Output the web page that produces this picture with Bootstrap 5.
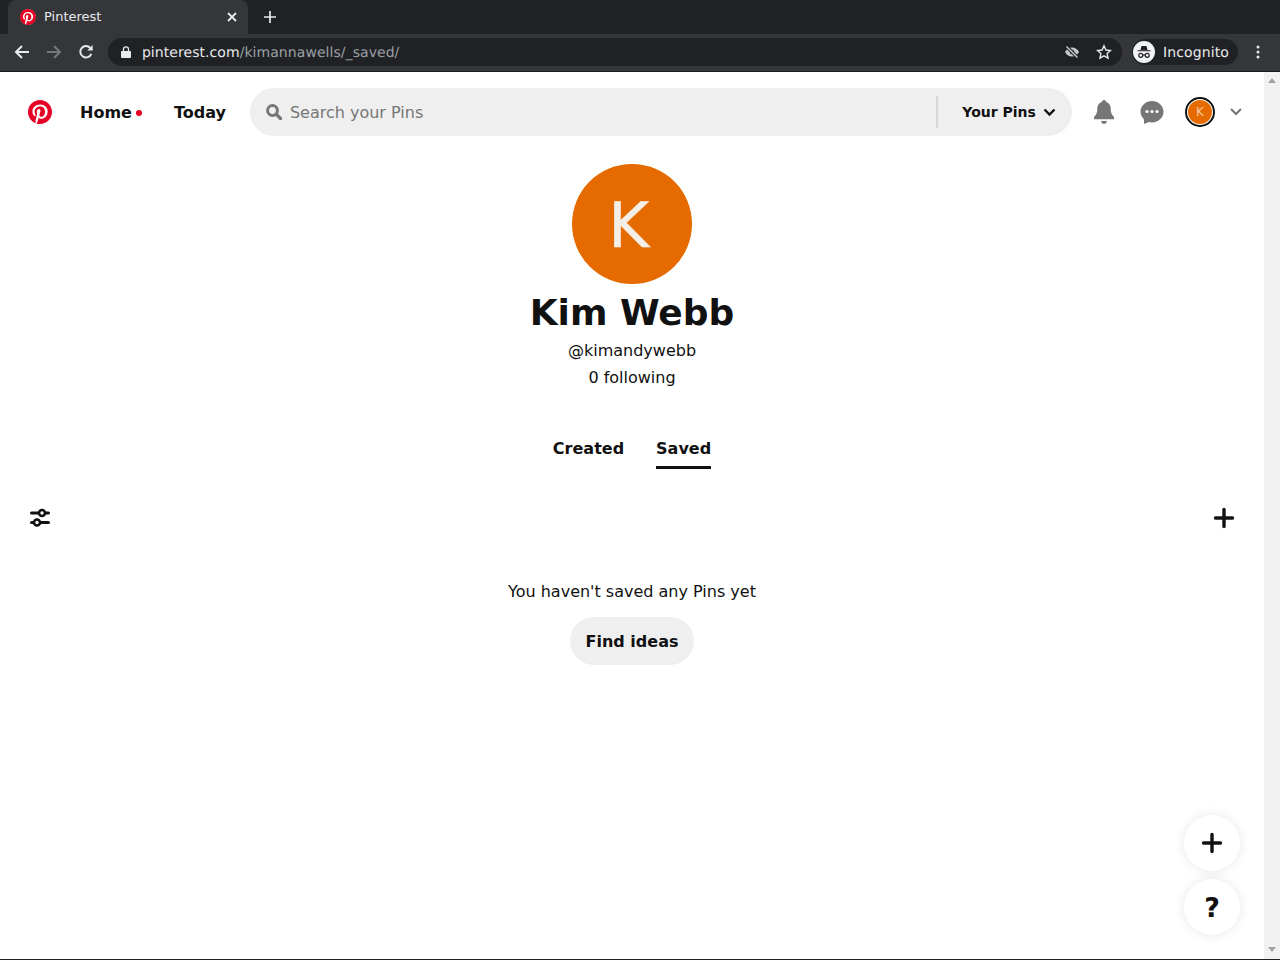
<!DOCTYPE html>
<html lang="en">
<head>
  <meta charset="UTF-8">
  <meta name="viewport" content="width=device-width, initial-scale=1.0">
  <title>Pinterest</title>
  <link href="https://cdn.jsdelivr.net/npm/bootstrap@5.3.0/dist/css/bootstrap.min.css" rel="stylesheet">
  <style>
    html, body { height: 960px; overflow: hidden; }
    body { font-family: "DejaVu Sans", sans-serif; color: #111; background: #fff; }

    /* browser chrome */
    .tab-strip { height: 34px; background: #202124; padding-left: 8px; }
    .tab-active { width: 240px; height: 34px; background: #35363a; border-radius: 8px 8px 0 0; color: #e8eaed; font-size: 13px; padding: 0 11px 0 12px; }
    .tab-title { margin-left: 8px; }
    .plus-new { margin-left: 16px; }
    .tool-bar { height: 38px; background: #35363a; border-bottom: 1px solid #1a1b1e; padding: 0 6px 1px 6px; }
    .tool-btn { width: 32px; height: 32px; }
    .menu-btn { margin-left: 4px; }
    .omnibox { height: 28px; width: 1015px; margin-left: 6px; background: #202124; border-radius: 14px; padding: 0 10px 0 12px; font-size: 14px; color: #e8eaed; text-rendering: geometricPrecision; }
    .url-text { margin-left: 10px; margin-top: 2px; letter-spacing: .06px; }
    .url-path { color: #9aa0a6; }
    .star-icon { margin-left: 16px; }
    .incognito-chip { height: 26px; width: 106px; margin-left: 10px; border-radius: 13px; background: #202124; color: #e8eaed; font-size: 14px; padding-left: 1px; text-rendering: geometricPrecision; }
    .incognito-face { width: 22px; height: 22px; background: #f1f3f4; border-radius: 50%; margin-right: 8px; }
    .incognito-word { margin-top: 2px; letter-spacing: .1px; }

    /* page */
    .page-area { height: 888px; border-bottom: 1px solid #222; }
    .page-main { width: 1264px; }
    .scroll-track { width: 16px; background: #f1f1f1; padding: 6px 0 7px; }
    .arrow-up { width: 0; height: 0; border: 4px solid transparent; border-top: 0; border-bottom: 5px solid #a3a3a3; }
    .arrow-down { width: 0; height: 0; border: 4px solid transparent; border-bottom: 0; border-top: 5px solid #a3a3a3; }

    .pin-header { height: 80px; padding: 16px 20px 16px 28px; }
    .nav-word { font-size: 16px; font-weight: 700; color: #111; margin-top: 2px; }
    .nav-home { margin-left: 28px; }
    .nav-today { margin-left: 32px; }
    .home-dot { width: 6px; height: 6px; border-radius: 50%; background: #e60023; margin-left: 4px; margin-top: 2px; }
    .search-pill { width: 822px; height: 48px; background: #efefef; border-radius: 24px; padding: 0 16px; margin-left: 24px; margin-right: 8px; }
    .search-hint { font-size: 16px; color: #767676; margin-left: 8px; margin-top: 2px; }
    .search-split { width: 2px; height: 32px; background: #d8d8d8; margin-right: 24px; }
    .pins-filter { font-size: 14px; font-weight: 700; color: #111; }
    .pins-chevron { margin-left: 7px; }
    .head-icon { width: 48px; height: 48px; }
    .head-chevron { margin-left: 6px; }
    .mini-avatar { width: 30px; height: 30px; border: 2px solid #111; border-radius: 50%; padding: 1px; background: #fff; }
    .mini-avatar span { width: 24px; height: 24px; background: #e56b00; border-radius: 50%; color: #f5c9a0; font-size: 12px; line-height: 1; }

    .big-avatar { width: 120px; height: 120px; background: #e56b00; border-radius: 50%; color: #f4efe6; font-size: 62px; line-height: 1; margin-top: 12px; padding: 4px 7px 0 0; -webkit-text-stroke: .6px #f4efe6; }
    .profile-name { font-size: 36px; font-weight: 700; line-height: 42px; margin: 8px 0 0; color: #111; }
    .profile-line { font-size: 16px; line-height: 24px; margin-top: 3px; color: #111; }
    .handle-line { margin-top: 5px; }
    .tab-row { margin-top: 47px; gap: 32px; }
    .tab-word { font-size: 16px; font-weight: 700; line-height: 24px; padding-bottom: 5px; color: #111; border-bottom: 3px solid transparent; }
    .tab-word-on { border-bottom-color: #111; }
    .tool-row { padding: 0 28px; margin-top: 37px; height: 24px; }
    .empty-note { font-size: 16px; line-height: 24px; margin-top: 50px; color: #111; }
    .find-btn { width: 124px; height: 48px; border-radius: 24px; background: #efefef; font-size: 16px; font-weight: 700; color: #111; margin-top: 13px; border: 0; padding: 2px 0 0; }
    .float-btn { position: absolute; right: 40px; width: 56px; height: 56px; background: #fff; border-radius: 50%; box-shadow: 0 0 12px rgba(0,0,0,.1); color: #111; }
    .float-plus { top: 743px; }
    .float-help { top: 807px; font-size: 27px; font-weight: 700; padding-top: 2px; }
  </style>
</head>
<body>
  <div class="tab-strip d-flex align-items-center">
    <div class="tab-active d-flex align-items-center">
      <svg width="16" height="16" viewBox="0 0 24 24"><circle cx="12" cy="12" r="11.500" fill="#fff"/><path d="M0 12c0 5.123 3.211 9.497 7.730 11.218-.11-.937-.227-2.482.025-3.566.217-.932 1.401-5.938 1.401-5.938s-.357-.715-.357-1.774c0-1.660.962-2.900 2.161-2.900 1.020 0 1.512.765 1.512 1.682 0 1.025-.653 2.557-.99 3.978-.281 1.189.597 2.159 1.769 2.159 2.123 0 3.756-2.239 3.756-5.471 0-2.861-2.056-4.860-4.991-4.860-3.398 0-5.393 2.549-5.393 5.184 0 1.027.395 2.127.889 2.726a.36.36 0 0 1 .083.343c-.091.378-.293 1.189-.332 1.355-.053.218-.173.265-.4.159-1.492-.694-2.424-2.875-2.424-4.627 0-3.769 2.737-7.229 7.892-7.229 4.144 0 7.365 2.953 7.365 6.899 0 4.117-2.595 7.431-6.199 7.431-1.211 0-2.348-.63-2.738-1.373 0 0-.599 2.282-.744 2.840-.282 1.084-1.064 2.456-1.549 3.235C9.584 23.815 10.770 24 12 24c6.627 0 12-5.373 12-12S18.627 0 12 0 0 5.373 0 12" fill="#e60023"/></svg>
      <span class="tab-title">Pinterest</span>
      <svg class="ms-auto" width="10" height="10" viewBox="0 0 10 10"><path d="M1 1l8 8M9 1l-8 8" stroke="#e8eaed" stroke-width="1.800"/></svg>
    </div>
    <svg class="plus-new" width="12" height="12" viewBox="0 0 12 12"><path d="M6 0v12M0 6h12" stroke="#e8eaed" stroke-width="1.700"/></svg>
  </div>

  <div class="tool-bar d-flex align-items-center">
    <div class="tool-btn d-flex align-items-center justify-content-center">
      <svg width="16" height="16" viewBox="0 0 16 16"><path d="M15 8H2M8 2L2 8l6 6" fill="none" stroke="#e8eaed" stroke-width="2"/></svg>
    </div>
    <div class="tool-btn d-flex align-items-center justify-content-center">
      <svg width="16" height="16" viewBox="0 0 16 16"><path d="M1 8h13M8 2l6 6-6 6" fill="none" stroke="#75777a" stroke-width="2"/></svg>
    </div>
    <div class="tool-btn d-flex align-items-center justify-content-center">
      <svg width="16" height="16" viewBox="0 0 16 16"><path d="M13.300 9.800A5.700 5.700 0 1 1 12.300 4" fill="none" stroke="#e8eaed" stroke-width="2"/><path d="M9.300 6.400h5.400V1z" fill="#e8eaed"/></svg>
    </div>
    <div class="omnibox d-flex align-items-center">
      <svg width="12" height="14" viewBox="0 0 12 14"><path d="M2 6h8a1 1 0 0 1 1 1v5a1 1 0 0 1-1 1H2a1 1 0 0 1-1-1V7a1 1 0 0 1 1-1z" fill="#e8eaed"/><path d="M3.500 6V4.300a2.500 2.500 0 0 1 5 0V6" fill="none" stroke="#e8eaed" stroke-width="1.300"/></svg>
      <span class="url-text">pinterest.com<span class="url-path">/kimannawells/_saved/</span></span>
      <svg class="ms-auto" width="16" height="16" viewBox="0 0 16 16"><path d="M1 8c1.600-3 4-4.500 7-4.500S13.400 5 15 8c-1.600 3-4 4.500-7 4.500S2.600 11 1 8z" fill="#c4c7c9"/><circle cx="8" cy="8" r="2.200" fill="#202124"/><path d="M2.500 2.500l11 11" stroke="#202124" stroke-width="3.400"/><path d="M2.500 2.500l11 11" stroke="#c4c7c9" stroke-width="1.500"/></svg>
      <svg class="star-icon" width="16" height="16" viewBox="0 0 16 16"><path d="M8 1.800l1.900 4.200 4.600.5-3.400 3.100.9 4.500-4-2.300-4 2.300.9-4.500L1.500 6.500 6.100 6z" fill="none" stroke="#e8eaed" stroke-width="1.400"/></svg>
    </div>
    <div class="incognito-chip d-flex align-items-center">
      <div class="incognito-face d-flex align-items-center justify-content-center">
        <svg width="16" height="16" viewBox="0 0 16 16"><path d="M4.500 6l1-4h5l1 4zM1.500 6.200h13v1h-13z" fill="#202124"/><circle cx="4.800" cy="11.300" r="2" fill="none" stroke="#202124" stroke-width="1.200"/><circle cx="11.200" cy="11.300" r="2" fill="none" stroke="#202124" stroke-width="1.200"/><path d="M6.800 11h2.400" stroke="#202124" stroke-width="1.100"/></svg>
      </div>
      <span class="incognito-word">Incognito</span>
    </div>
    <div class="tool-btn menu-btn d-flex align-items-center justify-content-center">
      <svg width="4" height="14" viewBox="0 0 4 14"><circle cx="2" cy="2" r="1.500" fill="#e8eaed"/><circle cx="2" cy="7" r="1.500" fill="#e8eaed"/><circle cx="2" cy="12" r="1.500" fill="#e8eaed"/></svg>
    </div>
  </div>

  <div class="page-area d-flex position-relative">
    <div class="page-main d-flex flex-column">
      <div class="pin-header d-flex align-items-center">
        <svg width="24" height="24" viewBox="0 0 24 24"><circle cx="12" cy="12" r="11.500" fill="#fff"/><path d="M0 12c0 5.123 3.211 9.497 7.730 11.218-.11-.937-.227-2.482.025-3.566.217-.932 1.401-5.938 1.401-5.938s-.357-.715-.357-1.774c0-1.660.962-2.900 2.161-2.900 1.020 0 1.512.765 1.512 1.682 0 1.025-.653 2.557-.99 3.978-.281 1.189.597 2.159 1.769 2.159 2.123 0 3.756-2.239 3.756-5.471 0-2.861-2.056-4.860-4.991-4.860-3.398 0-5.393 2.549-5.393 5.184 0 1.027.395 2.127.889 2.726a.36.36 0 0 1 .083.343c-.091.378-.293 1.189-.332 1.355-.053.218-.173.265-.4.159-1.492-.694-2.424-2.875-2.424-4.627 0-3.769 2.737-7.229 7.892-7.229 4.144 0 7.365 2.953 7.365 6.899 0 4.117-2.595 7.431-6.199 7.431-1.211 0-2.348-.63-2.738-1.373 0 0-.599 2.282-.744 2.840-.282 1.084-1.064 2.456-1.549 3.235C9.584 23.815 10.770 24 12 24c6.627 0 12-5.373 12-12S18.627 0 12 0 0 5.373 0 12" fill="#e60023"/></svg>
        <span class="nav-word nav-home">Home</span>
        <span class="home-dot"></span>
        <span class="nav-word nav-today">Today</span>
        <div class="search-pill d-flex align-items-center">
          <svg width="16" height="16" viewBox="0 0 16 16"><circle cx="6.500" cy="6.500" r="4.900" fill="none" stroke="#767676" stroke-width="3"/><path d="M10.500 10.500l4 4" stroke="#767676" stroke-width="3.200" stroke-linecap="round"/></svg>
          <span class="search-hint">Search your Pins</span>
          <span class="search-split ms-auto"></span>
          <span class="pins-filter">Your Pins</span>
          <svg class="pins-chevron" width="13" height="9" viewBox="0 0 13 9"><path d="M1.500 1.500l5 5 5-5" fill="none" stroke="#111" stroke-width="2.400"/></svg>
        </div>
        <div class="head-icon d-flex align-items-center justify-content-center">
          <svg width="20" height="24" viewBox="0 0 20 24"><path d="M10 0c1.300 0 2.200 1 2.300 2.100 3 .9 4.400 3.500 4.400 6.400 0 3.900.9 6.300 3.300 8.500v2.200H0V17c2.400-2.200 3.300-4.600 3.300-8.500 0-2.900 1.400-5.500 4.400-6.400C7.800 1 8.700 0 10 0z" fill="#767676"/><path d="M7 21h6c-.4 2-1.500 3-3 3s-2.600-1-3-3z" fill="#767676"/></svg>
        </div>
        <div class="head-icon d-flex align-items-center justify-content-center">
          <svg width="24" height="24" viewBox="0 0 24 24"><path d="M12 1c6.300 0 11.500 4.800 11.500 10.800S18.300 22.500 12 22.500c-1 0-2-.1-3-.4L4 24v-4.500C2 17.500.5 14.900.5 11.800.5 5.800 5.700 1 12 1z" fill="#767676"/><circle cx="7" cy="11.500" r="1.600" fill="#fff"/><circle cx="12" cy="11.500" r="1.600" fill="#fff"/><circle cx="17" cy="11.500" r="1.600" fill="#fff"/></svg>
        </div>
        <div class="head-icon d-flex align-items-center justify-content-center">
          <div class="mini-avatar d-flex"><span class="d-flex align-items-center justify-content-center">K</span></div>
        </div>
        <svg class="head-chevron" width="12" height="8" viewBox="0 0 12 8"><path d="M1 1l5 5 5-5" fill="none" stroke="#767676" stroke-width="2"/></svg>
      </div>

      <div class="d-flex flex-column align-items-center">
        <div class="big-avatar d-flex align-items-center justify-content-center">K</div>
        <h1 class="profile-name">Kim Webb</h1>
        <div class="profile-line handle-line">@kimandywebb</div>
        <div class="profile-line">0 following</div>
        <div class="tab-row d-flex">
          <span class="tab-word">Created</span>
          <span class="tab-word tab-word-on">Saved</span>
        </div>
      </div>

      <div class="tool-row d-flex align-items-center justify-content-between">
        <svg width="24" height="24" viewBox="0 0 24 24"><path d="M3.500 7h17M3.500 16.500h17" stroke="#111" stroke-width="3" stroke-linecap="round"/><circle cx="14" cy="7" r="3" fill="#fff" stroke="#111" stroke-width="2.600"/><circle cx="9" cy="16.500" r="3" fill="#fff" stroke="#111" stroke-width="2.600"/></svg>
        <svg width="24" height="24" viewBox="0 0 24 24"><path d="M12 3.500v17M3.500 12h17" stroke="#111" stroke-width="3.400" stroke-linecap="round"/></svg>
      </div>

      <div class="d-flex flex-column align-items-center">
        <div class="empty-note">You haven't saved any Pins yet</div>
        <button class="find-btn btn" type="button">Find ideas</button>
      </div>
    </div>

    <div class="scroll-track d-flex flex-column align-items-center justify-content-between">
      <span class="arrow-up"></span>
      <span class="arrow-down"></span>
    </div>

    <div class="float-btn float-plus d-flex align-items-center justify-content-center">
      <svg width="24" height="24" viewBox="0 0 24 24"><path d="M12 3.500v17M3.500 12h17" stroke="#111" stroke-width="3.400" stroke-linecap="round"/></svg>
    </div>
    <div class="float-btn float-help d-flex align-items-center justify-content-center">?</div>
  </div>

  <script src="https://cdn.jsdelivr.net/npm/bootstrap@5.3.0/dist/js/bootstrap.bundle.min.js"></script>
</body>
</html>
